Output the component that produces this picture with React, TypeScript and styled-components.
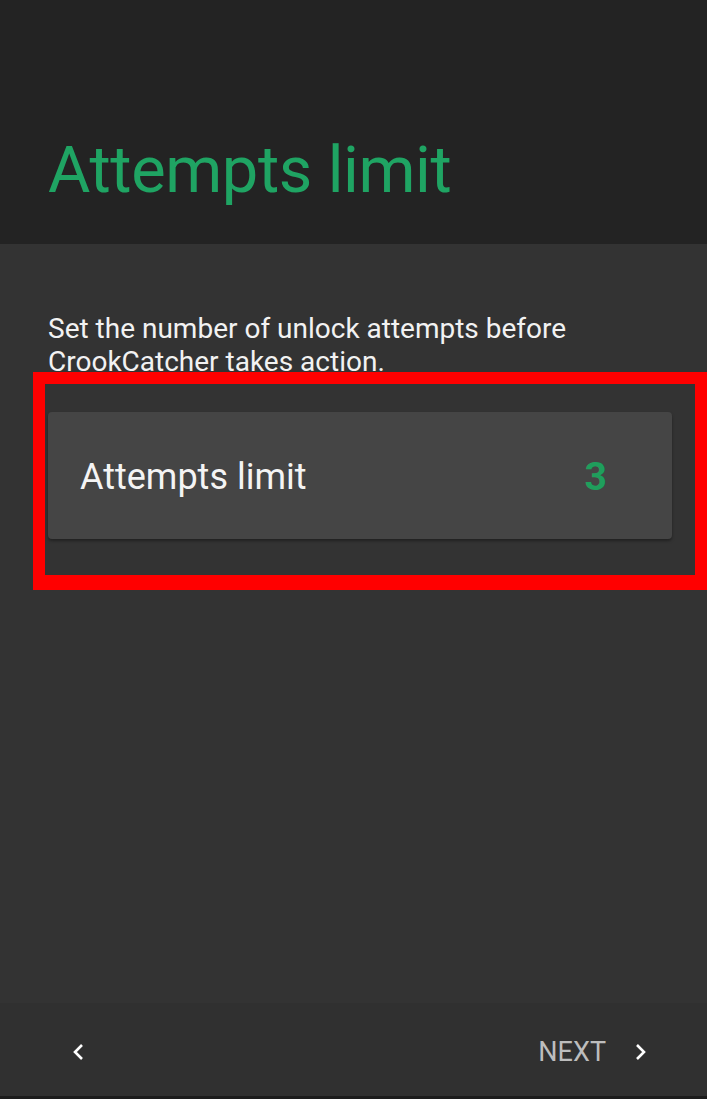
import React from "react";
import styled, { createGlobalStyle } from "styled-components";

const Global = createGlobalStyle`
  html, body { margin: 0; padding: 0; background: #333333; }
  body { font-family: Roboto, "Noto Sans", sans-serif; }
`;

const Screen = styled.div`
  width: 707px;
  height: 1099px;
  display: flex;
  flex-direction: column;
  background: #333333;
  overflow: hidden;
`;

const Header = styled.header`
  height: 244px;
  flex-shrink: 0;
  background: #232323;
  display: flex;
  align-items: flex-start;
  padding: 132px 48px 0;
  box-sizing: border-box;
`;

const Title = styled.h1`
  margin: 0;
  font-family: Roboto, sans-serif;
  font-weight: 400;
  font-size: 65px;
  color: #1fa463;
  letter-spacing: -0.4px;
`;

const Body = styled.main`
  flex: 1;
  display: flex;
  flex-direction: column;
  padding: 68px 0 0 48px;
`;

const Description = styled.p`
  margin: 0;
  font-size: 28px;
  line-height: 33px;
  color: #f2f2f2;
  width: 600px;
`;

const Highlight = styled.div`
  margin: -6px 0 0 -15px;
  border: 12px solid #ff0000;
  border-bottom-width: 15px;
  padding: 28px 23px 36px 3px;
  width: 674px;
  box-sizing: border-box;
`;

const Card = styled.div`
  height: 127px;
  box-sizing: border-box;
  background: #454545;
  border-radius: 4px;
  box-shadow: 0 2px 3px rgba(0, 0, 0, 0.35);
  display: flex;
  align-items: center;
  justify-content: space-between;
  padding: 3px 65px 0 32px;
`;

const CardLabel = styled.span`
  font-size: 36px;
  color: #f4f4f4;
`;

const CardValue = styled.span`
  font-size: 39px;
  font-weight: 700;
  color: #1f9e5c;
`;

const Footer = styled.footer`
  height: 96px;
  flex-shrink: 0;
  box-sizing: border-box;
  background: #303030;
  display: flex;
  align-items: center;
  justify-content: space-between;
  padding: 4px 54px 0 66px;
  border-bottom: 3px solid #1c1c1c;
`;

const NavButton = styled.button`
  background: none;
  border: none;
  padding: 0;
  display: flex;
  align-items: center;
  gap: 23px;
  font-family: Roboto, sans-serif;
  font-size: 27px;
  color: #bdbdbd;
`;

const Chevron = ({ dir }: { dir: "left" | "right" }) => (
  <svg width="24" height="24" viewBox="0 0 24 24">
    <path
      d={dir === "left" ? "M16 5 L9 12 L16 19" : "M8 5 L15 12 L8 19"}
      stroke="#ffffff"
      strokeWidth="2.6"
      fill="none"
    />
  </svg>
);

export default function App() {
  return (
    <Screen>
      <Global />
      <Header>
        <Title>Attempts limit</Title>
      </Header>
      <Body>
        <Description>
          Set the number of unlock attempts before CrookCatcher takes action.
        </Description>
        <Highlight>
          <Card>
            <CardLabel>Attempts limit</CardLabel>
            <CardValue>3</CardValue>
          </Card>
        </Highlight>
      </Body>
      <Footer>
        <NavButton aria-label="Back">
          <Chevron dir="left" />
        </NavButton>
        <NavButton>
          NEXT
          <Chevron dir="right" />
        </NavButton>
      </Footer>
    </Screen>
  );
}
